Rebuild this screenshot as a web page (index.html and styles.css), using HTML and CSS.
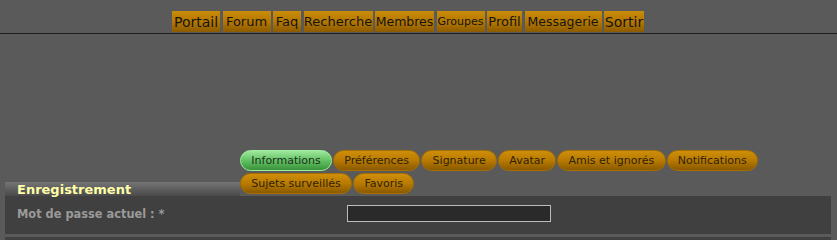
FILE: index.html
```html
<html>
<head>
<meta charset="utf-8">
<link rel="stylesheet" href="styles.css">
</head>
<body>
<div class="topnav">
  <a class="navbtn nav-portail" href="#">Portail</a>
  <a class="navbtn nav-forum" href="#">Forum</a>
  <a class="navbtn nav-faq" href="#">Faq</a>
  <a class="navbtn nav-recherche" href="#">Recherche</a>
  <a class="navbtn nav-membres" href="#">Membres</a>
  <a class="navbtn nav-groupes" href="#">Groupes</a>
  <a class="navbtn nav-profil" href="#">Profil</a>
  <a class="navbtn nav-messagerie" href="#">Messagerie</a>
  <a class="navbtn nav-sortir" href="#">Sortir</a>
</div>

<div class="main">
  <div class="profile-head">
    <div class="head-title">Enregistrement</div>
    <div class="tabs">
      <a class="tab active" href="#">Informations</a>
      <a class="tab" href="#">Préférences</a>
      <a class="tab" href="#">Signature</a>
      <a class="tab" href="#">Avatar</a>
      <a class="tab" href="#">Amis et ignorés</a>
      <a class="tab" href="#">Notifications</a>
      <a class="tab" href="#">Sujets surveillés</a>
      <a class="tab" href="#">Favoris</a>
    </div>
  </div>
  <div class="panel">
    <label class="field-label" for="cur_password">Mot de passe actuel : *</label>
    <input class="field-input" type="password" id="cur_password">
  </div>
  <div class="panel panel-next"></div>
</div>
</body>
</html>
```

FILE: styles.css
```css
body {
  margin: 0;
  background-color: #5a5a5a;
  font-family: "DejaVu Sans", Verdana, sans-serif;
}

.topnav {
  display: flex;
  gap: 2.5px;
  padding: 11px 0 1px 172px;
  border-bottom: 1px solid #1f1f1f;
}

.navbtn {
  display: block;
  height: 21px;
  line-height: 22px;
  text-align: center;
  font-size: 13px;
  color: #141414;
  text-decoration: none;
  white-space: nowrap;
  overflow: hidden;
  background: linear-gradient(to bottom, #c98c0a 0%, #b57800 50%, #8c5b00 100%);
}

.nav-portail { width: 48px; font-size: 14px; }
.nav-forum { width: 48px; }
.nav-faq { width: 28px; }
.nav-recherche { width: 69px; }
.nav-membres { width: 59px; font-size: 12.5px; }
.nav-groupes { width: 48px; font-size: 11px; }
.nav-profil { width: 35px; }
.nav-messagerie { width: 77px; font-size: 12.5px; }
.nav-sortir { width: 40px; font-size: 14px; }

.main {
  margin-top: 116px;
  padding: 0 6px 0 5px;
}

.profile-head {
  display: grid;
  grid-template-columns: 235px 1fr;
  align-items: end;
}

.head-title {
  height: 14px;
  line-height: 15px;
  padding-left: 12px;
  font-size: 13px;
  font-weight: bold;
  color: #ffffa8;
  background: linear-gradient(to bottom, #757575 0%, #5e5e5e 50%, #4a4a4a 100%);
}

.tabs {
  display: flex;
  flex-wrap: wrap;
  gap: 2px 1px;
  padding-bottom: 2px;
}

.tab {
  display: block;
  height: 19px;
  line-height: 19px;
  padding: 0 10.3px;
  border: 1px solid #a66f00;
  border-radius: 11px;
  font-size: 11px;
  color: #2e2208;
  text-decoration: none;
  white-space: nowrap;
  background: linear-gradient(to bottom, #cf8f0a 0%, #b87a00 50%, #8a5a00 100%);
}

.tab.active {
  border-color: #9ef09e;
  color: #1e2e1e;
  background: linear-gradient(to bottom, #9ee89e 0%, #62c262 50%, #3a923a 100%);
}

.panel {
  display: grid;
  grid-template-columns: 330px 204px;
  align-items: center;
  height: 38px;
  padding: 0 12px;
  background-color: #404040;
}

.panel-next {
  margin-top: 3px;
  height: 10px;
}

.field-label {
  font-size: 11.4px;
  font-weight: bold;
  color: #9a9a9a;
  margin-top: -2px;
}

.field-input {
  box-sizing: border-box;
  width: 204px;
  height: 17px;
  margin: -4px 0 0 0;
  padding: 0 3px;
  border: 1px solid #bcbcbc;
  background-color: #2a2a2a;
  color: #ddd;
}
```
